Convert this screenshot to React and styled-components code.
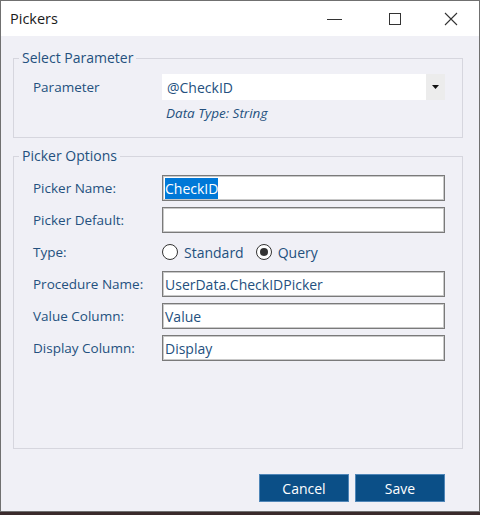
import React from 'react';
import styled, { createGlobalStyle } from 'styled-components';

const GlobalStyle = createGlobalStyle`
    html, body {
        margin: 0;
        padding: 0;
        background: #3a2a2c;
    }
    * {
        box-sizing: border-box;
    }
`;

const Janela = styled.div`
    width: 480px;
    height: 512px;
    display: flex;
    flex-direction: column;
    background: #f0f0f6;
    border: 1px solid #707070;
    font-family: "Open Sans", "Noto Sans", sans-serif;
    font-size: 13.5px;
    color: #24507e;
`;

const BarraTitulo = styled.div`
    height: 35px;
    display: flex;
    align-items: center;
    background: #ffffff;
    padding-left: 9px;
`;

const Titulo = styled.div`
    flex: 1;
    font-size: 14.5px;
    color: #1a1a1a;
    margin-top: -1px;
`;

const BotaoJanela = styled.div`
    width: 56px;
    height: 35px;
    display: flex;
    align-items: center;
    justify-content: center;
    margin-right: ${(p) => p.$direita || '0'};
`;

const Conteudo = styled.div`
    flex: 1;
    display: flex;
    flex-direction: column;
    padding: 13px 16px 0 12px;
`;

const Grupo = styled.fieldset`
    margin: 0;
    padding: 0 17px 0 19px;
    border: 1px solid #d6d6de;
    min-width: 0;
    flex: ${(p) => (p.$grow ? 1 : 'none')};
    margin-bottom: ${(p) => (p.$gap ? '9px' : '0')};
`;

const Legenda = styled.legend`
    padding: 0 3px;
    margin-left: -14px;
    font-size: 14px;
    line-height: 18px;
`;

const Formulario = styled.div`
    display: grid;
    grid-template-columns: 129px 1fr;
    grid-auto-rows: ${(p) => p.$linhas || '26px'};
    row-gap: ${(p) => p.$espaco || '6px'};
    align-items: center;
    padding-top: ${(p) => p.$top || '10px'};
    padding-bottom: ${(p) => p.$bottom || '0'};
`;

const Rotulo = styled.div`
    white-space: nowrap;
`;

const Combo = styled.div`
    height: 26px;
    display: flex;
    align-items: center;
    background: #ffffff;
`;

const ComboTexto = styled.div`
    flex: 1;
    padding-left: 5px;
    font-size: 14px;
`;

const ComboSeta = styled.div`
    width: 19px;
    height: 26px;
    background: #ececec;
    display: flex;
    align-items: center;
    justify-content: center;
`;

const TipoDados = styled.div`
    grid-column: 2;
    font-style: italic;
    padding-left: 4px;
    line-height: 19px;
`;

const CaixaTexto = styled.div`
    height: 26px;
    background: #ffffff;
    border: 1px solid #7a7a7a;
    box-shadow: inset 0 0 0 1px #c9c9c9;
    display: flex;
    align-items: center;
    padding-left: 2px;
    color: #24507e;
    font-size: 14px;
`;

const Selecionado = styled.span`
    background: #0078d7;
    color: #ffffff;
    padding: 1px 0;
`;

const GrupoRadio = styled.div`
    display: flex;
    align-items: center;
    gap: 12px;
`;

const OpcaoRadio = styled.label`
    display: flex;
    align-items: center;
    gap: 6px;
    font-size: 14px;
`;

const Circulo = styled.span`
    width: 16px;
    height: 16px;
    border-radius: 50%;
    border: 1px solid #333333;
    background: #ffffff;
    display: flex;
    align-items: center;
    justify-content: center;

    &::after {
        content: '';
        width: 8px;
        height: 8px;
        border-radius: 50%;
        background: ${(p) => (p.$marcado ? '#333333' : 'transparent')};
    }
`;

const Rodape = styled.div`
    display: flex;
    justify-content: flex-end;
    gap: 6px;
    padding: 25px 18px 9px 0;
`;

const Botao = styled.button`
    width: 90px;
    height: 28px;
    background: #0b4f87;
    border: 1px solid #4f86b8;
    color: #ffffff;
    font-family: inherit;
    font-size: 14px;
    padding: 0;
`;

const campos = [
    { rotulo: 'Procedure Name:', valor: 'UserData.CheckIDPicker' },
    { rotulo: 'Value Column:', valor: 'Value' },
    { rotulo: 'Display Column:', valor: 'Display' },
];

export default function App() {
    return (
        <>
            <GlobalStyle />
            <Janela>
                <BarraTitulo>
                    <Titulo>Pickers</Titulo>
                    <BotaoJanela $direita="4px">
                        <svg width="16" height="16" viewBox="0 0 16 16">
                            <line x1="0" y1="8.5" x2="15" y2="8.5" stroke="#333" strokeWidth="1" />
                        </svg>
                    </BotaoJanela>
                    <BotaoJanela>
                        <svg width="16" height="16" viewBox="0 0 16 16">
                            <rect x="2.5" y="2.5" width="11" height="11" fill="none" stroke="#333" strokeWidth="1" />
                        </svg>
                    </BotaoJanela>
                    <BotaoJanela>
                        <svg width="16" height="16" viewBox="0 0 16 16">
                            <path d="M2 2 L14 14 M14 2 L2 14" stroke="#333" strokeWidth="1.1" />
                        </svg>
                    </BotaoJanela>
                </BarraTitulo>
                <Conteudo>
                    <Grupo $gap>
                        <Legenda>Select Parameter</Legenda>
                        <Formulario $top="7px" $bottom="14px" $linhas="auto" $espaco="4px">
                            <Rotulo>Parameter</Rotulo>
                            <Combo>
                                <ComboTexto>@CheckID</ComboTexto>
                                <ComboSeta>
                                    <svg width="7" height="4" viewBox="0 0 7 4">
                                        <path d="M0 0 L7 0 L3.5 4 Z" fill="#111" />
                                    </svg>
                                </ComboSeta>
                            </Combo>
                            <TipoDados>Data Type: String</TipoDados>
                        </Formulario>
                    </Grupo>
                    <Grupo $grow>
                        <Legenda>Picker Options</Legenda>
                        <Formulario>
                            <Rotulo>Picker Name:</Rotulo>
                            <CaixaTexto>
                                <Selecionado>CheckID</Selecionado>
                            </CaixaTexto>
                            <Rotulo>Picker Default:</Rotulo>
                            <CaixaTexto />
                            <Rotulo>Type:</Rotulo>
                            <GrupoRadio>
                                <OpcaoRadio>
                                    <Circulo />
                                    Standard
                                </OpcaoRadio>
                                <OpcaoRadio>
                                    <Circulo $marcado />
                                    Query
                                </OpcaoRadio>
                            </GrupoRadio>
                            {campos.map((c) => (
                                <React.Fragment key={c.rotulo}>
                                    <Rotulo>{c.rotulo}</Rotulo>
                                    <CaixaTexto>{c.valor}</CaixaTexto>
                                </React.Fragment>
                            ))}
                        </Formulario>
                    </Grupo>
                    <Rodape>
                        <Botao>Cancel</Botao>
                        <Botao>Save</Botao>
                    </Rodape>
                </Conteudo>
            </Janela>
        </>
    );
}
